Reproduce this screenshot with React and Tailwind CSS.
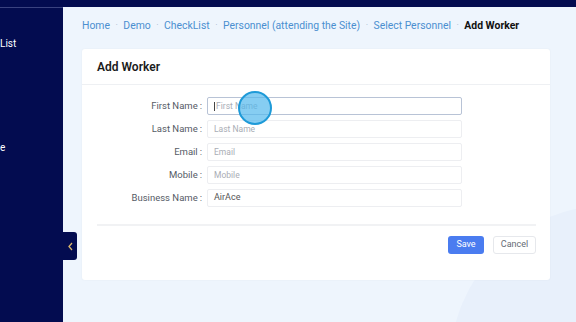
import React from "react";

const fields = [
  { label: "First Name", ph: "First Name", focus: true },
  { label: "Last Name", ph: "Last Name" },
  { label: "Email", ph: "Email" },
  { label: "Mobile", ph: "Mobile" },
  { label: "Business Name", ph: "", value: "AirAce" },
];

export default function App() {
  const crumbs = ["Home", "Demo", "CheckList", "Personnel (attending the Site)", "Select Personnel"];
  return (
    <div className="w-[576px] h-[322px] overflow-hidden flex flex-col bg-[#eef5fd] relative" style={{ fontFamily: "Roboto, 'Noto Sans', sans-serif" }}>
      <div className="absolute left-[450px] top-[205px] w-[320px] h-[320px] rounded-full bg-[#e8f0fb]" />
      <div className="h-[7px] bg-[#030c50] shrink-0 relative" />
      <div className="flex flex-1 min-h-0 relative">
        <aside className="w-[63px] shrink-0 bg-[#030c50] border-t border-[#3a4380] text-white text-[10px] relative">
          <div className="absolute left-0 top-[28px]">List</div>
          <div className="absolute left-0 top-[132px]">e</div>
        </aside>
        <main className="flex-1 pl-[19px] pr-[26px] pt-[12px] relative">
          <nav className="flex items-center text-[10.4px] text-[#4b8fd0] h-[14px] whitespace-nowrap">
            {crumbs.map((c) => (
              <React.Fragment key={c}>
                <span>{c}</span>
                <span className="mx-[5.5px] text-[#a8b8cc] text-[9px]">·</span>
              </React.Fragment>
            ))}
            <span className="text-[#111] font-bold">Add Worker</span>
          </nav>
          <div className="mt-[16px] bg-white rounded-[3px] shadow-[0_0_2px_rgba(0,0,0,0.05)] w-[468px] h-[231px]">
            <div className="h-[36px] border-b border-[#eef0f3] flex items-center pl-[15px] text-[12px] font-semibold text-[#1b1b1b]">
              Add Worker
            </div>
            <div className="pt-[12px] pl-[15px] pr-[14px]">
              <div className="flex flex-col gap-[5px]">
                {fields.map((f) => (
                  <div key={f.label} className="flex items-center h-[18px]">
                    <label className="w-[110px] text-right text-[9.5px] text-[#555b66] pr-[5px]">
                      {f.label}<span className="ml-[2px]">:</span>
                    </label>
                    <div
                      className={
                        "w-[255px] h-[18px] rounded-[2px] flex items-center pl-[6px] text-[8.5px] bg-white " +
                        (f.focus ? "border border-[#b8c3d6]" : "border border-[#edeef1]")
                      }
                    >
                      {f.focus && <span className="w-[1px] h-[9px] bg-[#444] mr-[1px]" />}
                      {f.value ? (
                        <span className="text-[#555] text-[9px]">{f.value}</span>
                      ) : (
                        <span className="text-[#a9adb5]">{f.ph}</span>
                      )}
                    </div>
                  </div>
                ))}
              </div>
              <div className="mt-[17px] border-t-2 border-[#f1f2f4]" />
              <div className="flex justify-end gap-[9px] mt-[10px]">
                <button className="w-[36px] h-[18px] rounded-[3px] bg-[#4a7cf0] text-white text-[9px]">Save</button>
                <button className="w-[43px] h-[18px] rounded-[3px] bg-white border border-[#e6e8ec] text-[#666b75] text-[9px]">Cancel</button>
              </div>
            </div>
          </div>
          <div className="absolute left-0 top-[225px] w-[14px] h-[28px] bg-[#030c50] rounded-r-[3px] flex items-center justify-center">
            <svg width="7" height="9" viewBox="0 0 7 9"><path d="M5 1 L2 4.5 L5 8" fill="none" stroke="#d9b56b" strokeWidth="1.3" /></svg>
          </div>
        </main>
      </div>
      <div className="absolute left-[238px] top-[91px] w-[34px] h-[34px] rounded-full bg-[#52b8ec]/70 border-2 border-[#1e9ad8]" />
    </div>
  );
}
